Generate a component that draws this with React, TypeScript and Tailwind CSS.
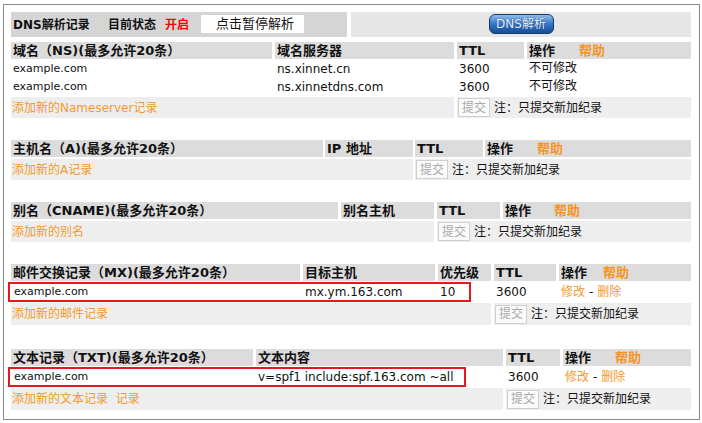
import React from "react";

const FONT = "font-['DejaVu_Sans','Noto_Sans_CJK_SC',sans-serif]";

function Hd({ children }: { children?: React.ReactNode }) {
  return (
    <div className="bg-[#dcdcdc] h-[17px] flex items-center pl-[2px] font-bold text-[13px] text-[#111] whitespace-nowrap overflow-hidden">
      {children}
    </div>
  );
}

function OpHd({ w }: { w: string }) {
  return (
    <div className="bg-[#dcdcdc] h-[17px] flex items-center pl-[2px] font-bold text-[13px] text-[#111] whitespace-nowrap">
      <span className={w}>操作</span>
      <span className="text-[#f7931e]">帮助</span>
    </div>
  );
}

function Cell({ children, cls = "", size = "text-[12px]" }: { children?: React.ReactNode; cls?: string; size?: string }) {
  return (
    <div className={"flex items-center pl-[2px] text-[#111] whitespace-nowrap " + size + " " + cls}>
      {children}
    </div>
  );
}

function Submit() {
  return (
    <div className="flex items-center gap-[4px] h-full pl-[1px]">
      <div className="w-[32px] h-[19px] border border-[#cfcfcf] bg-[#fbfbfb] text-[#a8a8a8] text-[12px] flex items-center justify-center">
        提交
      </div>
      <span className="text-[12px] text-[#111]">注：只提交新加纪录</span>
    </div>
  );
}

function AddLink({ children }: { children: React.ReactNode }) {
  return (
    <div className="bg-[#eeeeee] flex items-center pl-[1px] text-[12px] text-[#f39a2b] whitespace-nowrap">
      {children}
    </div>
  );
}

function Ops() {
  return (
    <Cell>
      <span className="text-[#f39a2b]">修改</span>
      <span className="mx-[4px]">-</span>
      <span className="text-[#f39a2b]">删除</span>
    </Cell>
  );
}

export default function App() {
  return (
    <div className={"w-[702px] h-[423px] bg-white overflow-hidden pt-[4px] pl-[3px] " + FONT}>
      <div className="w-[697px] h-[416px] border border-[#8a8a8a] pt-[7px] pl-[7px] pr-[8px] pb-[8px]">
        {/* top bar */}
        <div className="flex gap-[4px] h-[25px]">
          <div className="w-[336px] bg-[#d5d5d5] flex items-center pl-[2px] text-[12px] font-bold text-[#111] whitespace-nowrap">
            <span className="w-[95px]">DNS解析记录</span>
            <span className="w-[57px]">目前状态</span>
            <span className="text-[#ff0000] w-[36px]">开启</span>
            <div className="w-[103px] h-[18px] bg-white flex items-center pl-[15px] font-normal text-[13px] mb-[1px]">
              点击暂停解析
            </div>
          </div>
          <div className="flex-1 bg-[#e6e6e6] flex items-center justify-center">
            <div className="w-[65px] h-[20px] rounded-[6px] border border-[#163a6b] bg-gradient-to-b from-[#8fbcea] via-[#3576c8] to-[#184c96] flex items-center justify-center text-[12px] text-[#eaf3ff] [text-shadow:0_0_1px_#0a2550] mt-[-2px]">
              DNS解析
            </div>
          </div>
        </div>

        {/* NS */}
        <div className="mt-[5px] grid grid-cols-[261px_179px_67px_1fr] gap-x-[3px] gap-y-[2px] grid-rows-[17px_16px_16px_21px]">
          <Hd>域名（NS)(最多允许20条）</Hd>
          <Hd>域名服务器</Hd>
          <Hd>TTL</Hd>
          <OpHd w="w-[50px]" />
          <Cell size="text-[11px]">example.com</Cell>
          <Cell>ns.xinnet.cn</Cell>
          <Cell>3600</Cell>
          <Cell cls="mt-[-3px]">不可修改</Cell>
          <Cell size="text-[11px]">example.com</Cell>
          <Cell>ns.xinnetdns.com</Cell>
          <Cell>3600</Cell>
          <Cell cls="mt-[-3px]">不可修改</Cell>
          <div className="col-span-2 flex">
            <AddLink>添加新的Nameserver记录</AddLink>
            <div className="flex-1 bg-[#eeeeee]" />
          </div>
          <div className="col-span-2 bg-[#eeeeee]">
            <Submit />
          </div>
        </div>

        {/* A */}
        <div className="mt-[22px] grid grid-cols-[312px_88px_68px_1fr] gap-x-[2px] gap-y-[2px] grid-rows-[17px_21px]">
          <Hd>主机名（A)(最多允许20条）</Hd>
          <Hd>IP 地址</Hd>
          <Hd>TTL</Hd>
          <OpHd w="w-[50px]" />
          <div className="col-span-2 flex bg-[#eeeeee]">
            <AddLink>添加新的A记录</AddLink>
          </div>
          <div className="col-span-2 bg-[#eeeeee]">
            <Submit />
          </div>
        </div>

        {/* CNAME */}
        <div className="mt-[22px] grid grid-cols-[327px_93px_63px_1fr] gap-x-[3px] gap-y-[2px] grid-rows-[17px_21px]">
          <Hd>别名（CNAME)(最多允许20条）</Hd>
          <Hd>别名主机</Hd>
          <Hd>TTL</Hd>
          <OpHd w="w-[49px]" />
          <div className="col-span-2 flex bg-[#eeeeee]">
            <AddLink>添加新的别名</AddLink>
          </div>
          <div className="col-span-2 bg-[#eeeeee]">
            <Submit />
          </div>
        </div>

        {/* MX */}
        <div className="relative mt-[22px] grid grid-cols-[289px_132px_53px_62px_1fr] gap-x-[3px] gap-y-[2px] grid-rows-[17px_18px_22px]">
          <Hd>邮件交换记录（MX)(最多允许20条）</Hd>
          <Hd>目标主机</Hd>
          <Hd>优先级</Hd>
          <Hd>TTL</Hd>
          <OpHd w="w-[42px]" />
          <Cell cls="pl-[3px]" size="text-[11px]">example.com</Cell>
          <Cell>mx.ym.163.com</Cell>
          <Cell>10</Cell>
          <Cell>3600</Cell>
          <Ops />
          <div className="col-span-3 flex bg-[#eeeeee]">
            <AddLink>添加新的邮件记录</AddLink>
          </div>
          <div className="col-span-2 bg-[#eeeeee]">
            <Submit />
          </div>
          <div className="absolute left-[-3px] top-[18px] w-[463px] h-[20px] border-2 border-[#e5181e]" />
        </div>

        {/* TXT */}
        <div className="relative mt-[24px] grid grid-cols-[242px_247px_54px_1fr] gap-x-[3px] gap-y-[2px] grid-rows-[17px_18px_22px]">
          <Hd>文本记录（TXT)(最多允许20条）</Hd>
          <Hd>文本内容</Hd>
          <Hd>TTL</Hd>
          <OpHd w="w-[50px]" />
          <Cell cls="pl-[3px]" size="text-[11px]">example.com</Cell>
          <Cell>v=spf1 include:spf.163.com ~all</Cell>
          <Cell>3600</Cell>
          <Ops />
          <div className="col-span-2 flex bg-[#eeeeee]">
            <AddLink>添加新的文本记录&nbsp;&nbsp;记录</AddLink>
          </div>
          <div className="col-span-2 bg-[#eeeeee]">
            <Submit />
          </div>
          <div className="absolute left-[-3px] top-[18px] w-[458px] h-[20px] border-2 border-[#e5181e]" />
        </div>
      </div>
    </div>
  );
}
